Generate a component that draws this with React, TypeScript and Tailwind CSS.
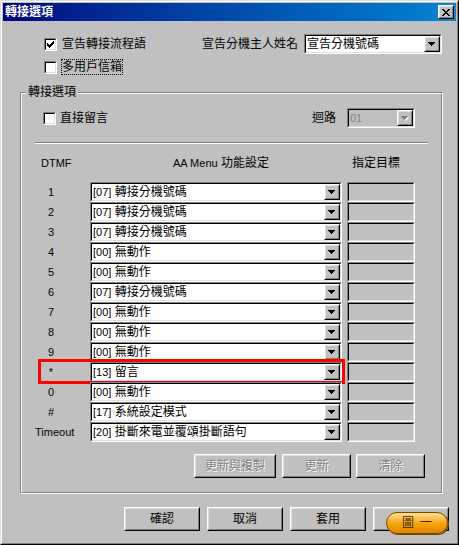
import React from "react";

const FONT = "font-['Liberation_Sans','Noto_Sans_CJK_TC',sans-serif]";

const rows = [
  { key: "1", code: "07", label: "轉接分機號碼" },
  { key: "2", code: "07", label: "轉接分機號碼" },
  { key: "3", code: "07", label: "轉接分機號碼" },
  { key: "4", code: "00", label: "無動作" },
  { key: "5", code: "00", label: "無動作" },
  { key: "6", code: "07", label: "轉接分機號碼" },
  { key: "7", code: "00", label: "無動作" },
  { key: "8", code: "00", label: "無動作" },
  { key: "9", code: "00", label: "無動作" },
  { key: "*", code: "13", label: "留言" },
  { key: "0", code: "00", label: "無動作" },
  { key: "#", code: "17", label: "系統設定模式" },
  { key: "Timeout", code: "20", label: "掛斷來電並覆頌掛斷語句" },
];

function Raised({ className = "", children }: { className?: string; children?: React.ReactNode }) {
  return (
    <div className={`border border-t-white border-l-white border-b-black border-r-black ${className}`}>
      <div className="w-full h-full border border-t-[#dfdfdf] border-l-[#dfdfdf] border-b-[#808080] border-r-[#808080] bg-[#c0c0c0] flex items-center justify-center">
        {children}
      </div>
    </div>
  );
}

function Sunken({ className = "", inner = "bg-white", children }: { className?: string; inner?: string; children?: React.ReactNode }) {
  return (
    <div className={`border border-t-[#808080] border-l-[#808080] border-b-white border-r-white ${className}`}>
      <div className={`w-full h-full flex border border-t-black border-l-black border-b-[#dfdfdf] border-r-[#dfdfdf] ${inner}`}>
        {children}
      </div>
    </div>
  );
}

function Arrow({ disabled }: { disabled?: boolean }) {
  return (
    <Raised className="w-[16px] h-[16px] shrink-0">
      <svg width="8" height="5" viewBox="0 0 8 5" shapeRendering="crispEdges">
        {disabled && <path d="M1 1h7v1H1z M2 2h5v1H2z M3 3h3v1H3z M4 4h1v1H4z" fill="#fff" />}
        <path
          d="M0 0h7v1H0z M1 1h5v1H1z M2 2h3v1H2z M3 3h1v1H3z"
          fill={disabled ? "#808080" : "#000"}
        />
      </svg>
    </Raised>
  );
}

function Combo({ className, children, disabled }: { className: string; children: React.ReactNode; disabled?: boolean }) {
  return (
    <Sunken className={`h-[20px] ${className}`} inner={disabled ? "bg-[#c0c0c0]" : "bg-white"}>
      <div className={`flex-1 pl-[1px] leading-[16px] text-[12px] whitespace-nowrap overflow-hidden ${disabled ? "text-[#808080]" : "text-black"}`}>
        {children}
      </div>
      <Arrow disabled={disabled} />
    </Sunken>
  );
}

function Checkbox({ checked }: { checked?: boolean }) {
  return (
    <Sunken className="w-[13px] h-[13px] shrink-0">
      {checked && (
        <svg width="9" height="9" viewBox="0 0 9 9" shapeRendering="crispEdges">
          <path
            d="M7 1h1v1H7z M6 2h2v1H6z M1 3h1v1H1z M5 3h3v1H5z M1 4h2v1H1z M4 4h3v1H4z M1 5h5v1H1z M2 6h3v1H2z M3 7h1v1H3z"
            fill="#000"
          />
        </svg>
      )}
    </Sunken>
  );
}

function Button({ label, width, disabled }: { label: string; width: string; disabled?: boolean }) {
  return (
    <Raised className={`h-[24px] ${width}`}>
      <span
        className={`text-[12px] leading-[14px] ${disabled ? "text-[#808080] [text-shadow:1px_1px_0_#fff]" : "text-black"}`}
      >
        {label}
      </span>
    </Raised>
  );
}

export default function App() {
  return (
    <div className={`w-[459px] h-[545px] ${FONT} border border-t-[#dfdfdf] border-l-[#dfdfdf] border-b-black border-r-black`}>
      <div className="w-full h-full border border-t-white border-l-white border-b-[#808080] border-r-[#808080] bg-[#c0c0c0] p-[1px]">
        {/* Title bar */}
        <div className="h-[18px] flex items-center justify-between bg-gradient-to-r from-[#000080] to-[#1084d0] pl-[2px] pr-[2px]">
          <span className="text-white text-[12px] font-bold leading-[14px]">轉接選項</span>
          <Raised className="w-[16px] h-[14px]">
            <svg width="8" height="7" viewBox="0 0 8 7" shapeRendering="crispEdges">
              <path
                d="M0 0h2v1H0z M6 0h2v1H6z M1 1h2v1H1z M5 1h2v1H5z M2 2h4v1H2z M3 3h2v1H3z M2 4h4v1H2z M1 5h2v1H1z M5 5h2v1H5z M0 6h2v1H0z M6 6h2v1H6z"
                fill="#000"
              />
            </svg>
          </Raised>
        </div>

        {/* Top options */}
        <div className="mt-[13px] ml-[41px] h-[20px] flex items-center">
          <div className="w-[158px] flex items-center gap-[5px]">
            <Checkbox checked />
            <span className="text-[12px] leading-[14px] text-black">宣告轉接流程語</span>
          </div>
          <span className="text-[12px] leading-[14px] text-black">宣告分機主人姓名</span>
          <Combo className="ml-[6px] w-[138px]">宣告分機號碼</Combo>
        </div>
        <div className="mt-[5px] ml-[41px] h-[16px] flex items-center gap-[4px]">
          <Checkbox />
          <span className="h-[16px] border border-dotted border-black text-[12px] leading-[14px] text-black">
            多用戶信箱
          </span>
        </div>

        {/* Group box */}
        <div className="relative mt-[17px] ml-[17px] w-[423px] border border-t-[#808080] border-l-[#808080] border-b-white border-r-white">
          <span className="absolute left-[5px] top-[-8px] px-[2px] bg-[#c0c0c0] text-[12px] leading-[14px] text-black">
            轉接選項
          </span>
          <div className="border border-t-white border-l-white border-b-[#808080] border-r-[#808080] pt-[14px] pb-[14px]">
            <div className="h-[20px] flex items-center pl-[21px] pr-[26px]">
              <Checkbox />
              <span className="ml-[4px] text-[12px] leading-[14px] text-black">直接留言</span>
              <span className="ml-auto text-[12px] leading-[14px] text-black">迴路</span>
              <Combo className="ml-[11px] w-[68px]" disabled>
                <span className="text-[11px]">01</span>
              </Combo>
            </div>

            <div className="mt-[14px] mx-[13px]">
              <div className="h-[1px] bg-[#808080]" />
              <div className="h-[1px] bg-white" />
            </div>

            <div className="mt-[12px] h-[14px] flex items-center text-[12px] leading-[14px] text-black">
              <div className="w-[68px] pl-[19px] text-[11px]">DTMF</div>
              <div className="w-[252px] pl-[10px] text-center whitespace-nowrap">
                <span className="text-[11px]">AA Menu</span> 功能設定
              </div>
              <div className="ml-[5px] pl-[5px]">指定目標</div>
            </div>

            <div className="mt-[12px] flex flex-col">
              {rows.map((r) => (
                <div key={r.key} className="relative h-[20px] flex items-center">
                  <div className="w-[68px] pl-[13px] text-[11px] leading-[14px] text-black">
                    {r.key === "Timeout" ? (
                      <span>Timeout</span>
                    ) : (
                      <span className="inline-block w-[32px] text-center">{r.key}</span>
                    )}
                  </div>
                  <Combo className="w-[252px]">
                    <span className="text-[11px]">[{r.code}]</span> {r.label}
                  </Combo>
                  <Sunken className="ml-[5px] w-[68px] h-[20px]" inner="bg-[#c0c0c0]" />
                  {r.key === "*" && (
                    <div className="absolute left-[16px] top-[-3px] w-[307px] h-[25px] border-[3px] border-[#ff0000]" />
                  )}
                </div>
              ))}
            </div>

            <div className="mt-[12px] flex justify-end pr-[16px]">
              <Button label="更新與複製" width="w-[82px]" disabled />
              <div className="ml-[6px]">
                <Button label="更新" width="w-[69px]" disabled />
              </div>
              <div className="ml-[5px]">
                <Button label="清除" width="w-[69px]" disabled />
              </div>
            </div>
          </div>
        </div>

        {/* Dialog buttons */}
        <div className="mt-[13px] ml-[121px] flex gap-[7px]">
          <Button label="確認" width="w-[76px]" />
          <Button label="取消" width="w-[76px]" />
          <Button label="套用" width="w-[76px]" />
          <div className="relative">
            <Button label="" width="w-[76px]" />
            <div className="absolute left-[13px] top-[5px] w-[62px] h-[22px] rounded-full border border-[#7a4800] bg-gradient-to-b from-[#ffe08a] via-[#f6a600] to-[#e08600] flex items-center justify-center gap-[6px] text-[12px] leading-[14px] text-[#3a2600] shadow-[1px_1px_0_#6b4a10]">
              <span>圖</span>
              <span>一</span>
            </div>
          </div>
        </div>
      </div>
    </div>
  );
}
